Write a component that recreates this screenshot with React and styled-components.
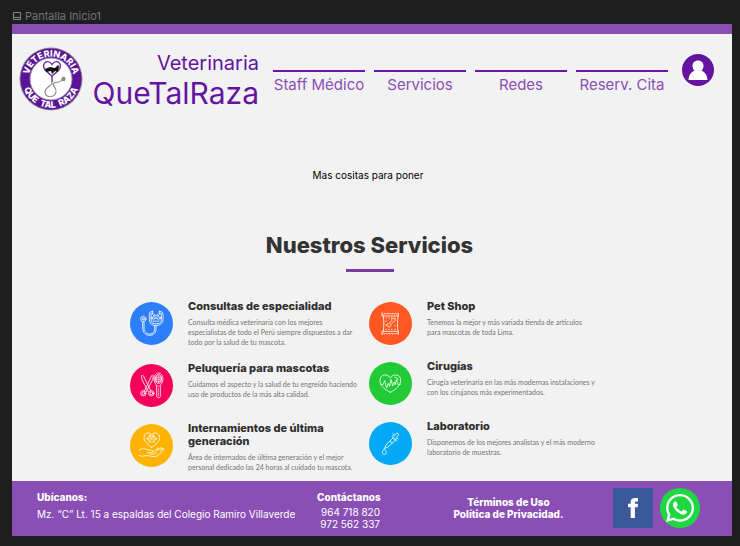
import React from "react";
import styled, { createGlobalStyle } from "styled-components";
import { FaWhatsapp } from "react-icons/fa";

const GlobalStyle = createGlobalStyle`
  *, *::before, *::after { box-sizing: border-box; }
  body {
    margin: 0;
    background: #1e1e1e;
    font-family: Inter, "Liberation Sans", sans-serif;
  }
  h1, h2, h3, p { margin: 0; }
  a { color: inherit; text-decoration: none; }
`;

const Canvas = styled.div`
  padding: 8px 8px 10px 12px;
`;

const FrameLabel = styled.div`
  display: flex;
  align-items: center;
  gap: 4px;
  height: 16px;
  padding-left: 1px;
  color: #757575;
  font-size: 11px;
  line-height: 16px;
`;

const Frame = styled.div`
  background: #f2f2f2;
  border-top: 10px solid #8a4fb5;
`;

const Header = styled.header`
  display: flex;
  align-items: flex-start;
  gap: 14px;
  padding: 13px 18px 0 7px;
`;

const Brand = styled.a`
  display: flex;
  justify-content: space-between;
  flex: 0 0 240px;
  color: #6414a0;
`;

const BrandText = styled.span`
  display: flex;
  flex-direction: column;
  text-align: right;
`;

const BrandKind = styled.span`
  font-size: 20px;
  line-height: 32px;
`;

const BrandName = styled.span`
  font-size: 30px;
  line-height: 28px;
`;

const Nav = styled.nav`
  display: grid;
  grid-template-columns: repeat(4, 1fr);
  gap: 9px;
  flex: 1;
  padding-top: 23px;
`;

const NavLink = styled.a`
  border-top: 2px solid #6b16ad;
  padding-top: 3px;
  color: #8a4fb5;
  font-size: 15px;
  line-height: 20px;
  text-align: center;
  white-space: nowrap;
`;

const Account = styled.button`
  width: 32px;
  height: 32px;
  margin-top: 7px;
  padding: 0;
  border: 0;
  border-radius: 50%;
  background: #6414a0;
  cursor: pointer;

  svg { display: block; }
`;

const Intro = styled.p`
  padding: 56px 8px 48px 0;
  color: #000;
  font-size: 10px;
  line-height: 16px;
  text-align: center;
`;

const Heading = styled.h1`
  display: flex;
  flex-direction: column;
  align-items: center;
  gap: 10px;
  padding-right: 5px;
  color: #333;
  font-size: 22px;
  font-weight: 800;
  line-height: 28px;

  &::after {
    content: "";
    width: 48px;
    height: 3px;
    background: #7b3a9e;
  }
`;

const Services = styled.section`
  display: grid;
  grid-template-columns: 224px 224px;
  justify-content: center;
  column-gap: 15px;
  padding: 28px 21px 9px 0;
`;

const Column = styled.div`
  display: flex;
  flex-direction: column;
  gap: 15px;
`;

const Item = styled.article`
  display: flex;
  align-items: flex-start;
  gap: 15px;
`;

const Badge = styled.div`
  flex: none;
  width: 43px;
  height: 43px;
  margin-top: 2px;
  border-radius: 50%;
  background: ${(p) => p.$color};

  svg { display: block; }
`;

const ItemTitle = styled.h2`
  color: #2e2e2e;
  font-size: 11px;
  font-weight: 800;
  line-height: 13px;
  white-space: pre;
`;

const ItemText = styled.p`
  padding-top: 4px;
  color: #747474;
  font-family: Lato, "Open Sans", sans-serif;
  font-size: 7px;
  line-height: 10px;
  white-space: pre;
`;

const Footer = styled.footer`
  display: grid;
  grid-template-columns: 280px 63px 1fr 87px;
  padding: 7px 32px 6px 25px;
  background: #8a4fb5;
  color: #fff;
  font-size: 10px;
  line-height: 12px;
`;

const FooterBlock = styled.div`
  padding-top: 3px;
  white-space: nowrap;
  text-align: ${(p) => p.$align || "left"};
`;

const FooterTitle = styled.h3`
  font-size: 10px;
  font-weight: 800;
  line-height: 12px;
  margin-bottom: ${(p) => p.$gap}px;
`;

const Legal = styled.nav`
  display: flex;
  flex-direction: column;
  align-items: center;
  padding: 8px 0 0 24px;
  font-weight: 800;
  white-space: nowrap;
`;

const Social = styled.div`
  display: flex;
  justify-content: space-between;
`;

const SocialLink = styled.a`
  display: flex;
  align-items: center;
  justify-content: center;
  width: 40px;
  height: 40px;
  border-radius: ${(p) => (p.$round ? "50%" : "0")};
  background: ${(p) => p.$color};
`;

function Logo() {
  return (
    <svg width="64" height="64" viewBox="0 0 64 64" role="img" aria-label="Veterinaria Que Tal Raza">
      <defs>
        <path id="logo-top" d="M11 40.200a22.500 22.500 0 1 1 42 0" />
        <path id="logo-bottom" d="M4.500 24a28.700 28.700 0 1 0 55 0" />
      </defs>
      <circle cx="32" cy="32" r="31.500" fill="#8d8797" />
      <circle cx="32" cy="32" r="30.500" fill="#5b1398" />
      <circle cx="32" cy="32" r="21" fill="#fff" stroke="#9a8da9" />
      <g fill="#fff" fontFamily="Inter, Liberation Sans, sans-serif" fontWeight="800" textAnchor="middle">
        <text fontSize="9">
          <textPath href="#logo-top" startOffset="50%">VETERINARIA</textPath>
        </text>
        <text fontSize="9">
          <textPath href="#logo-bottom" startOffset="50%">{"QUE\u00a0\u00a0TAL\u00a0\u00a0RAZA"}</textPath>
        </text>
      </g>
      <path d="M33 29C28 25 23 21 25 17c2-3.500 6-3 8 .5 2-3.500 6-4 8-.5 2 4-3 8-8 12z" fill="#fff" stroke="#74349b" strokeWidth="1.500" />
      <path d="M26 22l5-2 5 1 3-3 1 1-1 6-3-1-3 3-1-3-5 1z" fill="#111" />
      <path d="M33 29v6" stroke="#74349b" strokeWidth="1.500" />
      <path d="M33 35c1 4-7 5-7 10 0 6 10 6 11 0 1-5-5-6-2-9 3-2 5 1 8-3" fill="none" stroke="#8b8b8b" strokeWidth="1.200" />
      <circle cx="44.500" cy="32" r="2.200" fill="#8b8b8b" />
    </svg>
  );
}

function Paw({ x, y }) {
  return (
    <g transform={`translate(${x} ${y})`}>
      <path d="M0-1c-5 0-10 7-8 10 2 2 5-1 8-1s6 3 8 1c2-3-3-10-8-10z" />
      <ellipse cx="-5" cy="-8" rx="2.500" ry="4" />
      <ellipse cx="5" cy="-8" rx="2.500" ry="4" />
      <ellipse cx="-12" cy="-1" rx="2.500" ry="3.500" />
      <ellipse cx="12" cy="-1" rx="2.500" ry="3.500" />
    </g>
  );
}

const drawings = {
  stethoscope: (
    <>
      <circle cx="40" cy="51" r="8" />
      <circle cx="40" cy="51" r="3" />
      <path d="M38 60v18c0 14 10 22 21 22s19-7 19-18V71M42 60v18c0 10 7 18 17 18s15-6 15-14V71" />
      <path d="M68 29h-5c-5 0-5 5-5 12v12c0 9 6 16 14 17h12c8-1 15-8 15-17V41c0-7-1-12-6-12h-5M68 34h-5v19c0 7 4 12 10 12h11c6 0 10-5 10-12V34h-6" />
      <path d="M68 27v9M88 27v9" />
      <Paw x={78} y={49} />
    </>
  ),
  grooming: (
    <>
      <path d="M35 34c-1 6 0 11 3 17l17 32M40 35l23 47M69 34c1 6 0 11-3 17L49 83M65 35L43 82" />
      <circle cx="40" cy="88" r="8" />
      <circle cx="40" cy="88" r="4" />
      <circle cx="64" cy="88" r="8" />
      <circle cx="64" cy="88" r="4" />
      <path d="M72 45c0-11 5-18 13-18s14 7 14 18c0 10-6 14-8 20v31c0 7-11 7-11 0V65c-3-6-8-10-8-20z" />
      <ellipse cx="85.500" cy="45" rx="9" ry="13" />
      <path d="M80 35v20M85 33v24M90 35v20M77 40h17M77 46h17M78 52h15M80 66h11M85 73v23" strokeWidth="1.700" />
    </>
  ),
  care: (
    <>
      <path d="M65 70C51 60 42 52 42 41c0-14 16-20 23-8 7-12 24-6 24 8 0 11-10 19-24 29z" />
      <Paw x={65} y={45} />
      <path d="M27 79c9-8 18-6 24-2 5 3 12 0 17 3 5 4-1 7-15 6M69 83c8-1 10-11 15-11 3 0 1 5-3 8M80 80c6-2 9-9 14-9 3 0 0 6-4 9 5-6 12-9 11-5-5 9-13 18-20 21-11 5-21-2-33-1-9 1-12 4-21-1M59 90c9 1 14 0 20-3" />
    </>
  ),
  petFood: (
    <>
      <path d="M40 33l4 4 4-4 4 4 4-4 4 4 4-4 4 4 4-4 4 4 4-4 4 4 4-4v9H40zM40 97l4-4 4 4 4-4 4 4 4-4 4 4 4-4 4 4 4-4 4 4 4-4 4 4v-9H40zM43 42c2 15 2 31 0 46M87 42c-2 15-2 31 0 46" />
      <path d="M57 73c-7-2-4-9 1-7l11-11c-4-5 4-9 6-4 6-1 6 7 0 7L64 69c4 5-4 9-7 4z" />
      <path d="M51 48h2M59 48h2M67 48h2M77 48h2M51 82h2M59 82h2M67 82h2M77 82h2M51 57v2M78 70v2M51 68v2" />
    </>
  ),
  surgery: (
    <>
      <path d="M64 91C43 80 33 69 33 55c0-18 22-22 31-7 9-15 31-11 31 7 0 14-10 25-31 36z" />
      <path d="M35 67h8l4-11 6 22 5-14 4 9 4-21 5 20 5-12 3 8 3-15 4 14h8" />
      <path d="M78 46c6 0 9 4 9 9" />
    </>
  ),
  lab: (
    <>
      <path d="M70 45l13 13M72 48l-21 21-4 10 10-4 23-21M64 58l5 5" />
      <path d="M72 44c-3-4 2-7 5-4l5-5c6-3 9 2 5 6l-6 6c3 5-1 8-5 4M75 38l-3-3M88 51l-3-3" />
      <path d="M46 80c-3 5-6 8-6 12 0 7 12 7 12 0 0-4-3-7-6-12z" />
    </>
  ),
};

function ServiceDrawing({ name }) {
  return (
    <svg
      width="43"
      height="43"
      viewBox="0 0 129 129"
      fill="none"
      stroke="#fff"
      strokeWidth="2.400"
      strokeLinejoin="round"
      strokeLinecap="round"
      aria-hidden="true"
    >
      {drawings[name]}
    </svg>
  );
}

const columns = [
  [
    {
      icon: "stethoscope",
      color: "#2d7ff9",
      title: "Consultas de especialidad",
      text: "Consulta médica veterinaria con los mejores\nespecialistas de todo el Perú siempre dispuestos a dar\ntodo por la salud de tu mascota.",
    },
    {
      icon: "grooming",
      color: "#f5005a",
      title: "Peluquería para mascotas",
      text: "Cuidamos el aspecto y la salud de tu engreído haciendo\nuso de productos de la más alta calidad.",
    },
    {
      icon: "care",
      color: "#fcb400",
      title: "Internamientos de última\ngeneración",
      text: "Área de internados de última generación y el mejor\npersonal dedicado las 24 horas al cuidado tu mascota.",
    },
  ],
  [
    {
      icon: "petFood",
      color: "#ff5722",
      title: "Pet Shop",
      text: "Tenemos la mejor y más variada tienda de artículos\npara mascotas de toda Lima.",
    },
    {
      icon: "surgery",
      color: "#22cb35",
      title: "Cirugías",
      text: "Cirugía veterinaria en las más modernas instalaciones y\ncon los cirujanos más experimentados.",
    },
    {
      icon: "lab",
      color: "#03a9f4",
      title: "Laboratorio",
      text: "Disponemos de los mejores analistas y el más moderno\nlaboratorio de muestras.",
    },
  ],
];

const navItems = ["Staff Médico", "Servicios", "Redes", "Reserv. Cita"];

export default function App() {
  return (
    <>
      <GlobalStyle />
      <Canvas>
        <FrameLabel>
          <svg width="8" height="8" viewBox="0 0 8 8" fill="none" stroke="#858585" aria-hidden="true">
            <path d="M.5.5h7v7h-7zM.5 5.500h7" />
          </svg>
          Pantalla Inicio1
        </FrameLabel>
        <Frame>
          <Header>
            <Brand href="#inicio">
              <Logo />
              <BrandText>
                <BrandKind>Veterinaria</BrandKind>
                <BrandName>QueTalRaza</BrandName>
              </BrandText>
            </Brand>
            <Nav>
              {navItems.map((label) => (
                <NavLink key={label} href="#menu">{label}</NavLink>
              ))}
            </Nav>
            <Account type="button" aria-label="Mi cuenta">
              <svg width="32" height="32" viewBox="0 0 32 32" fill="#fff">
                <path d="M16 6.500c3.300 0 5.500 2.300 5.500 5.500 0 2-.8 3.600-2 4.700 3.500 1.300 5.800 4.300 6 9.300h-19c.2-5 2.500-8 6-9.300a6.200 6.200 0 0 1-2-4.700c0-3.200 2.200-5.500 5.500-5.500z" />
              </svg>
            </Account>
          </Header>
          <main>
            <Intro>Mas cositas para poner</Intro>
            <Heading>Nuestros Servicios</Heading>
            <Services>
              {columns.map((items, i) => (
                <Column key={i}>
                  {items.map((item) => (
                    <Item key={item.title}>
                      <Badge $color={item.color}>
                        <ServiceDrawing name={item.icon} />
                      </Badge>
                      <div>
                        <ItemTitle>{item.title}</ItemTitle>
                        <ItemText>{item.text}</ItemText>
                      </div>
                    </Item>
                  ))}
                </Column>
              ))}
            </Services>
          </main>
          <Footer>
            <FooterBlock>
              <FooterTitle $gap={5}>Ubícanos:</FooterTitle>
              <p>Mz. “C” Lt. 15 a espaldas del Colegio Ramiro Villaverde</p>
            </FooterBlock>
            <FooterBlock $align="right">
              <FooterTitle $gap={3}>Contáctanos</FooterTitle>
              <p>964 718 820</p>
              <p>972 562 337</p>
            </FooterBlock>
            <Legal>
              <a href="#terminos">Términos de Uso</a>
              <a href="#privacidad">Política de Privacidad.</a>
            </Legal>
            <Social>
              <SocialLink href="#facebook" aria-label="Facebook" $color="#3b5998">
                <svg width="10" height="20" viewBox="0 0 10 20" fill="#fff" aria-hidden="true">
                  <path d="M2.700 20V9.300H0V5.700h2.700V3.800C2.700 1.200 4.400 0 7 0h3v3.600H8.300c-1 0-1.400.4-1.400 1.300v.8H10l-.3 3.600H6.900V20z" />
                </svg>
              </SocialLink>
              <SocialLink href="#whatsapp" aria-label="WhatsApp" $color="#1fd741" $round>
                <FaWhatsapp size={32} />
              </SocialLink>
            </Social>
          </Footer>
        </Frame>
      </Canvas>
    </>
  );
}
